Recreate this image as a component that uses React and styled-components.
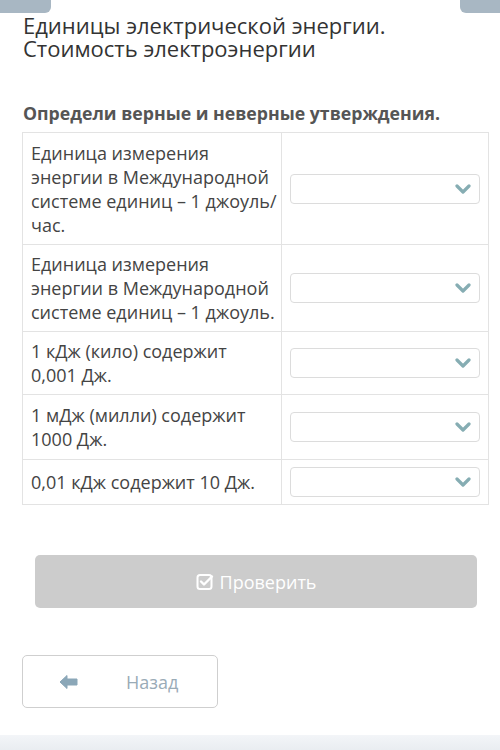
import React from "react";
import styled, { createGlobalStyle } from "styled-components";

const Global = createGlobalStyle`
  html, body { margin: 0; padding: 0; background: #fff; }
  body { font-family: "Open Sans", "Noto Sans", sans-serif; width: 500px; height: 750px; overflow: hidden; }
`;

const Page = styled.div`
  position: relative;
  width: 500px;
  height: 750px;
  background: #fff;
  display: flex;
  flex-direction: column;
`;

const TopBar = styled.div`
  display: flex;
  justify-content: space-between;
  height: 13px;
`;

const Tab = styled.div`
  width: ${p => p.$w}px;
  height: 13px;
  background: #a8b7c3;
  border-radius: ${p => (p.$right ? "0 0 0 6px" : "0 0 6px 0")};
`;

const Content = styled.div`
  padding: 0 11px 0 22px;
  display: flex;
  flex-direction: column;
`;

const Title = styled.h1`
  margin: 1px 0 0 1px;
  font-size: 22px;
  line-height: 23px;
  font-weight: 400;
  color: #333;
`;

const Instruction = styled.h2`
  margin: 42px 0 0 1px;
  font-size: 17.7px;
  line-height: 22px;
  font-weight: 700;
  color: #555;
`;

const Table = styled.div`
  margin-top: 8px;
  border: 1px solid #e3e3e3;
  display: grid;
  grid-template-columns: 259px 1fr;
`;

const Cell = styled.div`
  border-bottom: ${p => (p.$last ? "none" : "1px solid #e3e3e3")};
  border-right: ${p => (p.$left ? "1px solid #e3e3e3" : "none")};
  padding: ${p => (p.$left ? "7px 1px 7px 8px" : "0 8px")};
  font-size: 18px;
  line-height: 24px;
  color: #444;
  display: flex;
  align-items: center;
  box-sizing: border-box;
  min-height: ${p => p.$h}px;
`;

const Select = styled.div`
  width: 100%;
  height: 30px;
  border: 1px solid #dcdcdc;
  border-radius: 4px;
  box-sizing: border-box;
  display: flex;
  align-items: center;
  justify-content: flex-end;
  padding-right: 8px;
  background: #fff;
`;

const CheckButton = styled.div`
  margin: 50px 12px 0 13px;
  height: 53px;
  background: #cccccc;
  border-radius: 5px;
  display: flex;
  align-items: center;
  justify-content: center;
  gap: 6px;
  color: #fff;
  font-size: 18px;
`;

const BackButton = styled.div`
  margin-top: 47px;
  width: 196px;
  height: 53px;
  box-sizing: border-box;
  border: 1px solid #cfcfcf;
  border-radius: 5px;
  display: flex;
  align-items: center;
  padding-left: 36px;
  gap: 47px;
  color: #9aabb7;
  font-size: 18px;
`;

const Footer = styled.div`
  position: absolute;
  left: 0;
  right: 0;
  bottom: 0;
  height: 15px;
  background: linear-gradient(#f3f5f8, #e9edf1);
`;

const Chevron = () => (
  <svg width="16" height="12" viewBox="0 0 16 12">
    <path d="M2 3 L8 9 L14 3" fill="none" stroke="#86adb3" strokeWidth="3.2" strokeLinecap="round" strokeLinejoin="round" />
  </svg>
);

const CheckIcon = () => (
  <svg width="18" height="18" viewBox="0 0 18 18">
    <rect x="1.5" y="2" width="14" height="14" rx="2.5" fill="none" stroke="#fff" strokeWidth="2" />
    <path d="M5 8.5 L8 11.5 L16 3.5" fill="none" stroke="#fff" strokeWidth="2.4" strokeLinecap="round" strokeLinejoin="round" />
  </svg>
);

const Arrow = () => (
  <svg width="20" height="16" viewBox="0 0 20 16">
    <path d="M1 8 L8 1.5 L8 5 L18 5 L18 11 L8 11 L8 14.5 Z" fill="#8ba7b8" strokeLinejoin="round" stroke="#8ba7b8" strokeWidth="1" />
  </svg>
);

const rows = [
  { text: "Единица измерения энергии в Международной системе единиц – 1 джоуль/ час.", h: 112 },
  { text: "Единица измерения энергии в Международной системе единиц – 1 джоуль.", h: 87 },
  { text: "1 кДж (кило) содержит 0,001\u00A0Дж.", h: 63 },
  { text: "1 мДж (милли) содержит 1000\u00A0Дж.", h: 65 },
  { text: "0,01 кДж содержит 10 Дж.", h: 44 },
];

export default function App() {
  return (
    <Page>
      <Global />
      <TopBar>
        <Tab $w={51} />
        <Tab $w={40} $right />
      </TopBar>
      <Content>
        <Title>
          Единицы электрической энергии.
          <br />
          Стоимость электроэнергии
        </Title>
        <Instruction>Определи верные и неверные утверждения.</Instruction>
        <Table>
          {rows.map((r, i) => (
            <React.Fragment key={i}>
              <Cell $left $h={r.h} $last={i === rows.length - 1}>{r.text}</Cell>
              <Cell $h={r.h} $last={i === rows.length - 1}>
                <Select><Chevron /></Select>
              </Cell>
            </React.Fragment>
          ))}
        </Table>
        <CheckButton>
          <CheckIcon />
          Проверить
        </CheckButton>
        <BackButton>
          <Arrow />
          Назад
        </BackButton>
      </Content>
      <Footer />
    </Page>
  );
}
